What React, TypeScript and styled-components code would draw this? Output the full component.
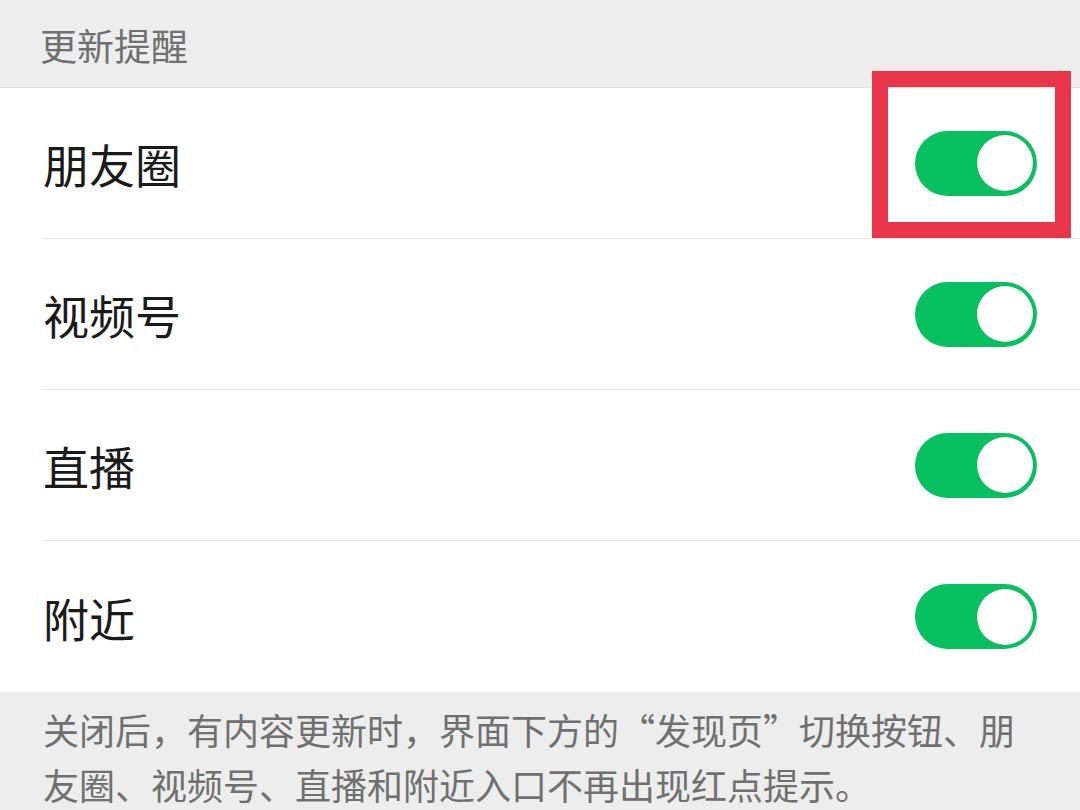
import styled, { createGlobalStyle } from 'styled-components';

const GlobalStyle = createGlobalStyle`
  html, body {
    margin: 0;
    padding: 0;
    background: #ededed;
    font-family: "Noto Sans CJK SC", "Noto Sans", sans-serif;
  }
`;

const Page = styled.div`
  width: 1080px;
  height: 810px;
  overflow: hidden;
  background: #ededed;
  position: relative;
`;

const SectionTitle = styled.div`
  height: 88px;
  padding-left: 40px;
  display: flex;
  align-items: center;
  font-size: 37px;
  color: #707070;
  border-bottom: 1px solid #e2e2e2;
  box-sizing: border-box;
  padding-top: 2px;
`;

const List = styled.div`
  background: #ffffff;
  padding-left: 42px;
`;

const Row = styled.div<{ last?: boolean }>`
  height: 151px;
  display: flex;
  align-items: center;
  justify-content: space-between;
  padding-right: 43px;
  box-sizing: border-box;
  border-bottom: ${p => (p.last ? 'none' : '1px solid #e6e6e6')};
`;

const Label = styled.span`
  font-size: 46px;
  color: #1a1a1a;
  padding-left: 1px;
`;

const Track = styled.div<{ on?: boolean }>`
  width: 122px;
  height: 65px;
  border-radius: 33px;
  background: ${p => (p.on ? '#07c160' : '#e5e5e5')};
  display: flex;
  align-items: center;
  justify-content: ${p => (p.on ? 'flex-end' : 'flex-start')};
  padding: 0 4px;
  box-sizing: border-box;
`;

const Knob = styled.div`
  width: 56px;
  height: 56px;
  border-radius: 50%;
  background: #ffffff;
  box-shadow: 0 0 1px rgba(0, 0, 0, 0.25);
`;

const Footer = styled.div`
  padding: 10px 40px 0 43px;
  font-size: 36px;
  line-height: 55px;
  color: #707070;
`;

const Highlight = styled.div`
  position: absolute;
  left: 872px;
  top: 71px;
  width: 199px;
  height: 167px;
  border: 16px solid #e8354a;
  box-sizing: border-box;
`;

const items = ['朋友圈', '视频号', '直播', '附近'];

export default function App() {
  return (
    <Page>
      <GlobalStyle />
      <SectionTitle>更新提醒</SectionTitle>
      <List>
        {items.map((name, i) => (
          <Row key={name} last={i === items.length - 1}>
            <Label>{name}</Label>
            <Track on>
              <Knob />
            </Track>
          </Row>
        ))}
      </List>
      <Footer>
        关闭后，有内容更新时，界面下方的“发现页”切换按钮、朋友圈、视频号、直播和附近入口不再出现红点提示。
      </Footer>
      <Highlight />
    </Page>
  );
}
